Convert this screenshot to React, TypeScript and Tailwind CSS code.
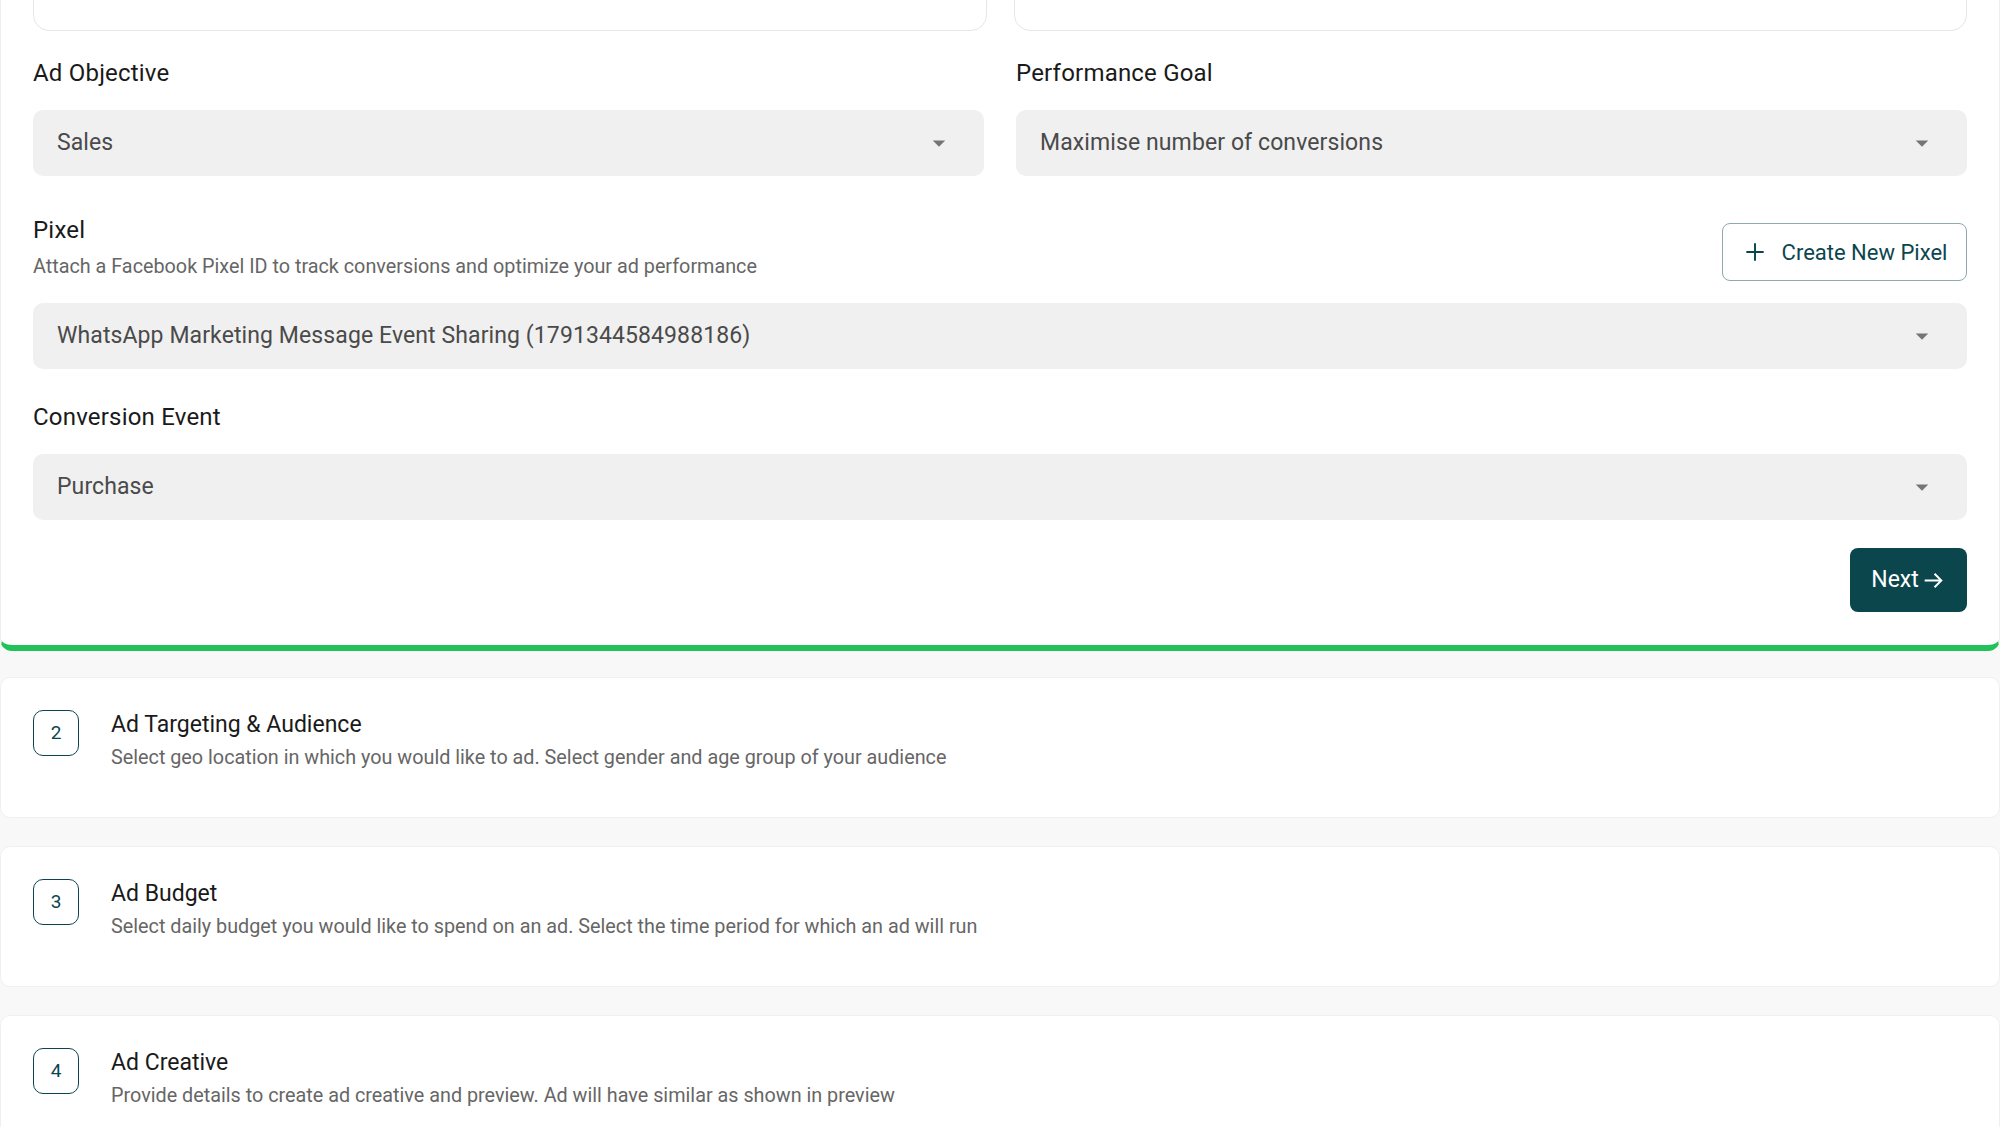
import React from 'react';

const TEAL = '#0b4650';

function Caret() {
  return (
    <svg viewBox="0 0 24 24" className="h-[30px] w-[30px] fill-[#757575]">
      <path d="M7 10l5 5 5-5z" />
    </svg>
  );
}

function SelectBox({ value }: { value: string }) {
  return (
    <div className="flex h-[66px] w-full items-center justify-between rounded-[10px] bg-[#f0f0f0] pl-6 pr-[30px]">
      <span className="text-[23px] tracking-[0.1px] text-[#4a4a4a]">{value}</span>
      <Caret />
    </div>
  );
}

function StepCard({ n, title, desc }: { n: number; title: string; desc: string }) {
  return (
    <div className="h-[141px] rounded-[10px] border border-[#f0f0f0] bg-white px-8 pt-[32px]">
      <div className="flex items-start gap-[32px]">
        <div className="flex h-[46px] w-[46px] shrink-0 items-center justify-center rounded-[10px] border-[1.5px] border-[#0b4650] text-[19px] text-[#0b4650]">
          {n}
        </div>
        <div className="-mt-[1px]">
          <div className="text-[23px] leading-[32px] text-[#1a1a1a]">{title}</div>
          <div className="mt-[2px] text-[19.8px] leading-[30px] text-[#666]">{desc}</div>
        </div>
      </div>
    </div>
  );
}

export default function App() {
  return (
    <div className="min-h-screen overflow-hidden bg-[#f8f8f8] font-['Roboto',sans-serif]">
      <div className="-mt-[69px]">
        {/* Step 1 - Ad settings, expanded */}
        <div className="rounded-b-[12px] border-x border-b-[6px] border-x-[#eeeeee] border-b-[#22c25a] bg-white px-8 pb-[33px]">
          <div className="grid grid-cols-2 gap-[27px]">
            <div className="h-[100px] rounded-[16px] border border-[#e6e6e6] px-6 pt-[46px] text-[18px] leading-[24px] text-[#555]">
              Select the Facebook page you want to run your ad campaign from
            </div>
            <div className="h-[100px] rounded-[16px] border border-[#e6e6e6] px-6 pt-[46px] text-[18px] leading-[24px] text-[#555]">
              Select the ad account to be charged for this ad campaign
            </div>
          </div>

          <div className="mt-[27px] grid grid-cols-2 gap-8">
            <div>
              <div className="text-[24px] leading-[30px] tracking-[0.2px] text-[#1a1a1a]">Ad Objective</div>
              <div className="mt-[22px]">
                <SelectBox value="Sales" />
              </div>
            </div>
            <div>
              <div className="text-[24px] leading-[30px] tracking-[0.2px] text-[#1a1a1a]">Performance Goal</div>
              <div className="mt-[22px]">
                <SelectBox value="Maximise number of conversions" />
              </div>
            </div>
          </div>

          <div className="mt-[39px] flex items-start justify-between">
            <div>
              <div className="text-[24px] leading-[30px] tracking-[0.2px] text-[#1a1a1a]">Pixel</div>
              <div className="mt-[7px] text-[19.8px] leading-[30px] text-[#666]">
                Attach a Facebook Pixel ID to track conversions and optimize your ad performance
              </div>
            </div>
            <button
              type="button"
              className="mt-[8px] flex h-[58px] w-[245px] items-center justify-center gap-[14px] rounded-[8px] border-[1.5px] border-[#8fa9ac] text-[22px] text-[#0b4650]"
            >
              <svg viewBox="0 0 24 24" className="h-[26px] w-[26px]" fill="none" stroke={TEAL} strokeWidth="1.8">
                <path d="M12 4v16M4 12h16" />
              </svg>
              <span>Create New Pixel</span>
            </button>
          </div>
          <div className="mt-[21px]">
            <SelectBox value="WhatsApp Marketing Message Event Sharing (1791344584988186)" />
          </div>

          <div className="mt-[33px] text-[24px] leading-[30px] tracking-[0.2px] text-[#1a1a1a]">Conversion Event</div>
          <div className="mt-[22px]">
            <SelectBox value="Purchase" />
          </div>

          <div className="mt-[28px] flex justify-end">
            <button
              type="button"
              className="flex h-[64px] w-[117px] items-center justify-center gap-[2px] rounded-[8px] bg-[#0b464d] text-[23px] text-white"
            >
              <span>Next</span>
              <svg viewBox="0 0 24 24" className="h-[25px] w-[25px]" fill="none" stroke="white" strokeWidth="1.9">
                <path d="M3.5 12h16M13 5.5l6.5 6.5-6.5 6.5" />
              </svg>
            </button>
          </div>
        </div>

        <div className="mt-[26px] flex flex-col gap-[28px]">
          <StepCard
            n={2}
            title="Ad Targeting & Audience"
            desc="Select geo location in which you would like to ad. Select gender and age group of your audience"
          />
          <StepCard
            n={3}
            title="Ad Budget"
            desc="Select daily budget you would like to spend on an ad. Select the time period for which an ad will run"
          />
          <StepCard
            n={4}
            title="Ad Creative"
            desc="Provide details to create ad creative and preview. Ad will have similar as shown in preview"
          />
        </div>
      </div>
    </div>
  );
}
